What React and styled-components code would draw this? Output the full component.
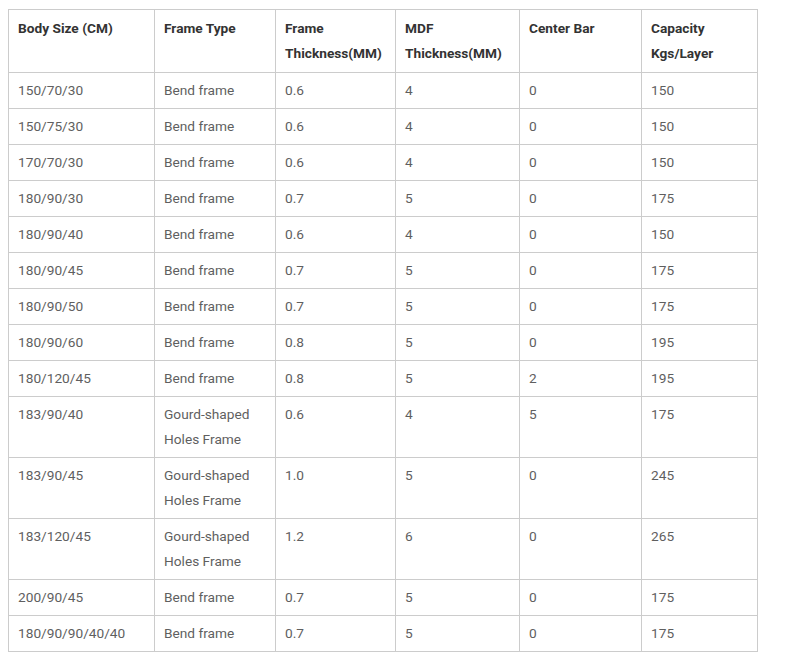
import React from "react";
import styled, { createGlobalStyle } from "styled-components";

const Global = createGlobalStyle`
  body { margin: 0; background: #fff; font-family: Roboto, "Liberation Sans", Arial, sans-serif; }
`;

const Wrap = styled.div`
  padding: 9px 8px;
`;

const Table = styled.table`
  border-collapse: collapse;
  table-layout: fixed;
  width: 749px;
  font-size: 13.7px;
  line-height: 25px;
  color: #5f5f5f;
`;

const Th = styled.th`
  border: 1px solid #ccc;
  padding: 6px 9px;
  text-align: left;
  vertical-align: top;
  font-weight: 700;
  color: #333;
`;

const Td = styled.td`
  border: 1px solid #ccc;
  padding: 5px 9px;
  text-align: left;
  vertical-align: top;
`;

const widths = [146, 121, 120, 124, 122, 116];
const headers = [
  "Body Size (CM)",
  "Frame Type",
  "Frame Thickness(MM)",
  "MDF Thickness(MM)",
  "Center Bar",
  "Capacity Kgs/Layer",
];

const rows = [
  ["150/70/30", "Bend frame", "0.6", "4", "0", "150"],
  ["150/75/30", "Bend frame", "0.6", "4", "0", "150"],
  ["170/70/30", "Bend frame", "0.6", "4", "0", "150"],
  ["180/90/30", "Bend frame", "0.7", "5", "0", "175"],
  ["180/90/40", "Bend frame", "0.6", "4", "0", "150"],
  ["180/90/45", "Bend frame", "0.7", "5", "0", "175"],
  ["180/90/50", "Bend frame", "0.7", "5", "0", "175"],
  ["180/90/60", "Bend frame", "0.8", "5", "0", "195"],
  ["180/120/45", "Bend frame", "0.8", "5", "2", "195"],
  ["183/90/40", "Gourd-shaped Holes Frame", "0.6", "4", "5", "175"],
  ["183/90/45", "Gourd-shaped Holes Frame", "1.0", "5", "0", "245"],
  ["183/120/45", "Gourd-shaped Holes Frame", "1.2", "6", "0", "265"],
  ["200/90/45", "Bend frame", "0.7", "5", "0", "175"],
  ["180/90/90/40/40", "Bend frame", "0.7", "5", "0", "175"],
];

export default function App() {
  return (
    <>
      <Global />
      <Wrap>
        <Table>
          <colgroup>
            {widths.map((w, i) => (
              <col key={i} style={{ width: w }} />
            ))}
          </colgroup>
          <thead>
            <tr>
              {headers.map((h) => (
                <Th key={h}>{h}</Th>
              ))}
            </tr>
          </thead>
          <tbody>
            {rows.map((r, i) => (
              <tr key={i}>
                {r.map((c, j) => (
                  <Td key={j}>{c}</Td>
                ))}
              </tr>
            ))}
          </tbody>
        </Table>
      </Wrap>
    </>
  );
}
